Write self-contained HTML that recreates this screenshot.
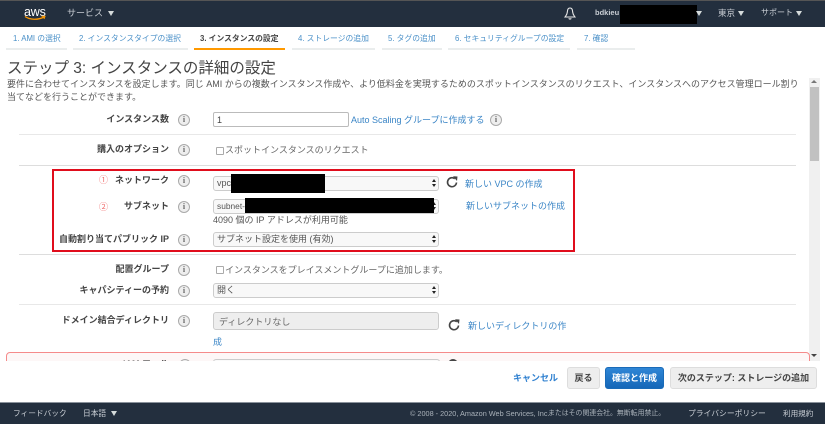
<!DOCTYPE html>
<html lang="ja">
<head>
<meta charset="utf-8">
<style>
html,body{margin:0;padding:0;background:#fff}
body{width:825px;height:424px;overflow:hidden;position:relative;font-family:"Liberation Sans","Noto Sans CJK JP",sans-serif;color:#444;font-size:9px}
.a{position:absolute;white-space:nowrap}
.t{position:absolute;white-space:nowrap;line-height:14px;height:14px}
.l{position:absolute;right:656px;white-space:nowrap;font-weight:700;font-size:9px;line-height:14px;color:#444}
.i{position:absolute;left:178px;width:10px;height:10px;border:1px solid #aaa;border-radius:50%;background:#eee;color:#666;font:700 8px/10px "Liberation Serif",serif;text-align:center}
.hr{position:absolute;left:19px;width:777px;background:#e8e8e8}
.tab{position:absolute;top:48px;height:2px;background:#eaeded}
.tt{position:absolute;top:32px;line-height:14px;font-size:7.800px;color:#4a90c8;white-space:nowrap}
.sel{position:absolute;left:213px;width:224px;height:13px;border:1px solid #ccc;border-radius:3px;background:#f8f8f8;font-size:9px;line-height:13px;color:#555;box-sizing:content-box}
.sel span{position:absolute;left:3px;top:0;white-space:nowrap}
.sel::after{content:"";position:absolute;right:2px;top:2px;width:0;height:0;border-left:2.500px solid transparent;border-right:2.500px solid transparent;border-bottom:3.500px solid #222}
.sel::before{content:"";position:absolute;right:2px;top:7px;width:0;height:0;border-left:2.500px solid transparent;border-right:2.500px solid transparent;border-top:3.500px solid #222}
.lnk{position:absolute;color:#3a85c6;font-size:9px;line-height:14px;white-space:nowrap}
.bk{position:absolute;background:#000}
.nav{position:absolute;color:#c9ced4;font-size:8px;line-height:14px;white-space:nowrap}
.tri{position:absolute;width:0;height:0;border-left:3.500px solid transparent;border-right:3.500px solid transparent;border-top:5px solid #d5dbdb}
.cb{position:absolute;width:6px;height:6px;border:1px solid #aaa;border-radius:1px;background:#fff}
.btn{position:absolute;top:367px;height:22px;box-sizing:border-box;border-radius:3px;text-align:center;font-weight:700;font-size:9px;line-height:21px;white-space:nowrap}
.g{background:#eee;border:1px solid #ddd;color:#444}
svg{position:absolute;overflow:visible}
</style>
</head>
<body>
<!-- top bar -->
<div class="a" style="left:0;top:0;width:825px;height:27px;background:#232f3e;border-top:1px solid #555;box-sizing:border-box"></div>
<div class="a" style="left:24px;top:5px;color:#fff;font-size:12.500px;line-height:14px;letter-spacing:-.2px">aws</div>
<svg style="left:24px;top:15px" width="22" height="6" viewBox="0 0 22 6"><path d="M1 1.500C6 5 14 5.200 20 2" fill="none" stroke="#f90" stroke-width="1.300"/><path d="M17.500 1.200L21 1.300 20 4" fill="none" stroke="#f90" stroke-width="1"/></svg>
<div class="nav" style="left:67px;top:6px;font-size:9px">サービス</div>
<div class="tri" style="left:108px;top:11px"></div>
<svg style="left:564px;top:7px" width="12" height="13" viewBox="0 0 12 13"><path d="M6 1C3.800 1 3.500 3 3.300 5.200 3.100 7.500 2 8.500 1 10H11C10 8.500 8.900 7.500 8.700 5.200 8.500 3 8.200 1 6 1ZM4.800 11.300C5.200 12.300 6.800 12.300 7.200 11.300" fill="none" stroke="#e8e8e8" stroke-width="1.100"/></svg>
<div class="nav" style="left:595px;top:6px;font-size:7.500px;font-weight:700">bdkieu</div>
<div class="bk" style="left:620px;top:5px;width:77px;height:19px"></div>
<div class="tri" style="left:696px;top:11px"></div>
<div class="nav" style="left:718px;top:6px;font-size:8.500px">東京</div>
<div class="tri" style="left:738px;top:11px"></div>
<div class="nav" style="left:761px;top:6px;font-size:8px">サポート</div>
<div class="tri" style="left:796px;top:11px"></div>

<!-- tabs -->
<div class="tt" style="left:13px">1. AMI の選択</div><div class="tab" style="left:6px;width:61px"></div>
<div class="tt" style="left:79px">2. インスタンスタイプの選択</div><div class="tab" style="left:73px;width:115px"></div>
<div class="tt" style="left:200px;color:#444;font-weight:700;font-size:7.800px">3. インスタンスの設定</div><div class="tab" style="left:194px;width:91px;background:#f90"></div>
<div class="tt" style="left:298px">4. ストレージの追加</div><div class="tab" style="left:292px;width:83px"></div>
<div class="tt" style="left:388px">5. タグの追加</div><div class="tab" style="left:382px;width:60px"></div>
<div class="tt" style="left:455px">6. セキュリティグループの設定</div><div class="tab" style="left:448px;width:122px"></div>
<div class="tt" style="left:584px">7. 確認</div><div class="tab" style="left:577px;width:58px"></div>

<!-- heading -->
<div class="a" style="left:7px;top:59px;font-size:15.500px;line-height:20px;color:#444">ステップ 3: インスタンスの詳細の設定</div>
<div class="a" style="left:7px;top:77px;font-size:9px;line-height:14px;color:#555">要件に合わせてインスタンスを設定します。同じ AMI からの複数インスタンス作成や、より低料金を実現するためのスポットインスタンスのリクエスト、インスタンスへのアクセス管理ロール割り</div>
<div class="a" style="left:7px;top:90px;font-size:9px;line-height:14px;color:#555">当てなどを行うことができます。</div>

<!-- scrollbar -->
<div class="a" style="left:809px;top:78px;width:11px;height:283px;background:#f0f0f0"></div>
<div class="a" style="left:810px;top:87px;width:9px;height:74px;background:#c1c1c1"></div>
<div class="a" style="left:811px;top:80px;width:0;height:0;border-left:3px solid transparent;border-right:3px solid transparent;border-bottom:3px solid #777"></div>
<div class="a" style="left:811px;top:354px;width:0;height:0;border-left:3px solid transparent;border-right:3px solid transparent;border-top:3px solid #444"></div>

<!-- form -->
<div class="l" style="top:112px">インスタンス数</div><div class="i" style="top:114px">i</div>
<div class="a" style="left:213px;top:112px;width:134px;height:13px;border:1px solid #bbb;border-radius:2px;font-size:9px;line-height:14px;color:#444;text-indent:3px">1</div>
<div class="lnk" style="left:351px;top:113px">Auto Scaling グループに作成する</div>
<div class="i" style="left:490px;top:114px">i</div>
<div class="hr" style="top:134px;height:1px"></div>

<div class="l" style="top:142px">購入のオプション</div><div class="i" style="top:144px">i</div>
<div class="cb" style="left:216px;top:147px"></div>
<div class="t" style="left:225px;top:143px;color:#666;font-size:9px">スポットインスタンスのリクエスト</div>
<div class="hr" style="top:165px;height:1px;background:#ddd"></div>

<!-- network -->
<div class="a" style="left:52px;top:169px;width:523px;height:83px;border:2px solid #e00d1c;box-sizing:border-box"></div>
<div class="t" style="left:99px;top:173px;color:#f07070;font-size:9px">①</div>
<div class="l" style="top:173px">ネットワーク</div><div class="i" style="top:175px">i</div>
<div class="sel" style="top:176px"><span>vpc</span></div>
<div class="bk" style="left:231px;top:174px;width:94px;height:19px"></div>
<svg style="left:446px;top:176px" width="12" height="12" viewBox="0 0 12 12"><path d="M10.500 6.500A4.500 4.500 0 1 1 8.800 2.700" fill="none" stroke="#444" stroke-width="1.600"/><path d="M7 0.200L11.500 0.500 11 5Z" fill="#444"/></svg>
<div class="lnk" style="left:465px;top:177px">新しい VPC の作成</div>

<div class="t" style="left:99px;top:200px;color:#f07070;font-size:9px">②</div>
<div class="l" style="top:199px">サブネット</div><div class="i" style="top:201px">i</div>
<div class="sel" style="top:199px"><span style="font-size:8.400px">subnet-</span></div>
<div class="bk" style="left:245px;top:198px;width:189px;height:15px"></div>
<div class="lnk" style="left:466px;top:199px">新しいサブネットの作成</div>
<div class="t" style="left:213px;top:213px;color:#555;font-size:9px">4090 個の IP アドレスが利用可能</div>

<div class="l" style="top:232px">自動割り当てパブリック IP</div><div class="i" style="top:234px">i</div>
<div class="sel" style="top:232px"><span>サブネット設定を使用 (有効)</span></div>
<div class="hr" style="top:254px;height:1px;background:#ddd"></div>

<div class="l" style="top:262px">配置グループ</div><div class="i" style="top:264px">i</div>
<div class="cb" style="left:216px;top:266px"></div>
<div class="t" style="left:225px;top:263px;color:#666;font-size:9px">インスタンスをプレイスメントグループに追加します。</div>

<div class="l" style="top:283px">キャパシティーの予約</div><div class="i" style="top:285px">i</div>
<div class="sel" style="top:283px"><span>開く</span></div>
<div class="hr" style="top:304px;height:1px"></div>

<div class="l" style="top:313px">ドメイン結合ディレクトリ</div><div class="i" style="top:315px">i</div>
<div class="a" style="left:213px;top:312px;width:224px;height:16px;border:1px solid #ccc;border-radius:3px;background:#eee;font-size:9px;line-height:18px;color:#666;text-indent:5px">ディレクトリなし</div>
<svg style="left:448px;top:319px" width="12" height="12" viewBox="0 0 12 12"><path d="M10.500 6.500A4.500 4.500 0 1 1 8.800 2.700" fill="none" stroke="#444" stroke-width="1.600"/><path d="M7 0.200L11.500 0.500 11 5Z" fill="#444"/></svg>
<div class="lnk" style="left:468px;top:319px">新しいディレクトリの作</div>
<div class="lnk" style="left:213px;top:335px">成</div>

<!-- IAM (clipped) -->
<div class="a" style="left:6px;top:352px;width:804px;height:9px;overflow:hidden">
  <div class="a" style="left:0;top:0;width:802px;height:30px;border:1px solid #f58a8a;border-radius:4px;background:#fdf7f7"></div>
  <div class="l" style="top:5px;right:auto;left:117px">IAM ロール</div>
  <div class="i" style="left:173px;top:7px">i</div>
  <div class="a" style="left:207px;top:7px;width:225px;height:14px;border:1px solid #ccc;border-radius:3px;background:#fafafa"></div>
  <div class="a" style="left:442px;top:7px;width:10px;height:10px;border:2px solid #444;border-radius:50%;box-sizing:border-box"></div>
</div>

<!-- action bar -->
<div class="a" style="left:513px;top:371px;color:#2f80d0;font-weight:700;font-size:9px;line-height:14px">キャンセル</div>
<div class="btn g" style="left:567px;width:33px">戻る</div>
<div class="btn" style="left:605px;width:59px;background:linear-gradient(#2f86d6,#1567b8);border:1px solid #1a6bb8;color:#fff">確認と作成</div>
<div class="btn g" style="left:670px;width:147px">次のステップ: ストレージの追加</div>

<!-- footer -->
<div class="a" style="left:0;top:402px;width:825px;height:22px;background:#232f3e;border-top:1px solid #8a929b;box-sizing:border-box"></div>
<div class="nav" style="left:13px;top:407px;font-size:7.700px">フィードバック</div>
<div class="nav" style="left:83px;top:407px;font-size:7.700px">日本語</div>
<div class="tri" style="left:111px;top:411px"></div>
<div class="nav" style="left:410px;top:407px;font-size:7.300px;color:#aab2ba">© 2008 - 2020, Amazon Web Services, Inc.</div>
<div class="nav" style="left:548px;top:407px;font-size:6.900px;color:#aab2ba">またはその関連会社。無断転用禁止。</div>
<div class="nav" style="left:688px;top:407px;font-size:7.800px">プライバシーポリシー</div>
<div class="nav" style="left:783px;top:407px;font-size:7.600px">利用規約</div>
</body>
</html>
